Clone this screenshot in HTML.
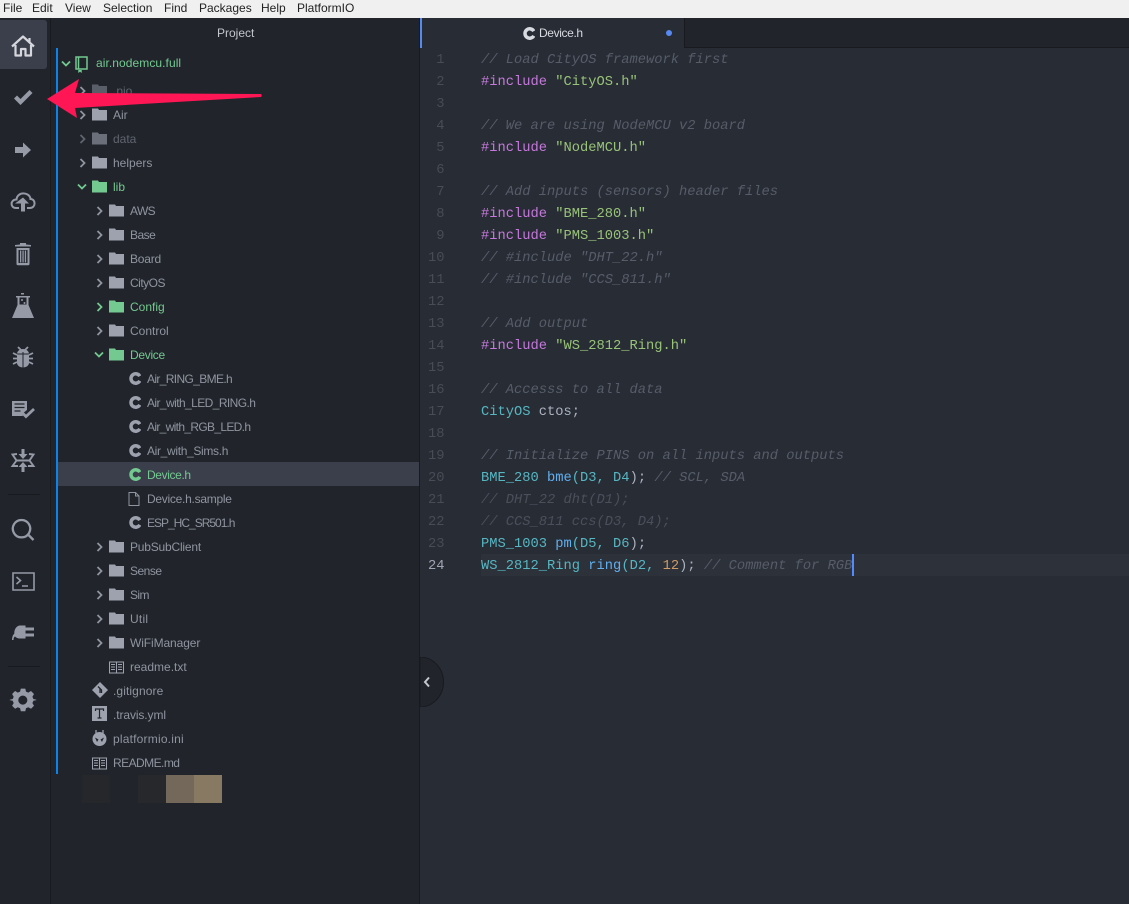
<!DOCTYPE html>
<html><head><meta charset="utf-8"><style>
html,body{margin:0;padding:0;width:1129px;height:904px;overflow:hidden;background:#21252b}
*{box-sizing:border-box}
.a{position:absolute}
#menu{left:0;top:0;width:1129px;height:18px;background:#f0f0f0;font:12px/16px "Liberation Sans",sans-serif;color:#222}
#menu span{position:absolute;top:0}
.r{position:absolute;height:24px;font:12px/24px "Liberation Sans",sans-serif;color:#8f949f;white-space:nowrap}
.g{color:#73c990}.d{color:#5f646e}
svg.i{position:absolute;overflow:visible}
#code{left:481px;top:50px;font:13.75px/22px "Liberation Mono",monospace;color:#abb2bf;white-space:pre;width:640px}
#nums{left:420px;top:50px;width:24.5px;text-align:right;font:13.75px/22px "Liberation Mono",monospace;color:#474c55;white-space:pre}
.c{color:#565c68;font-style:italic}.e{color:#4a4f5a;font-style:italic}.k{color:#c678dd}.s{color:#98c379}.t{color:#56b6c2}.f{color:#61afef}.n{color:#d19a66}
</style></head><body>
<svg width="0" height="0" style="position:absolute"><defs>
<symbol id="fo" viewBox="0 0 15 15"><path fill="currentColor" d="M0 1.500h6l1 1.500h8v10.500H0z"/></symbol>
<symbol id="cv" viewBox="0 0 8 10"><path fill="none" stroke="currentColor" stroke-width="1.800" d="M1.500 1l4 4-4 4"/></symbol>
<symbol id="cd" viewBox="0 0 10 8"><path fill="none" stroke="currentColor" stroke-width="1.800" d="M1 1.500l4 4 4-4"/></symbol>
<symbol id="ci" viewBox="0 0 13 13"><path fill="none" stroke="currentColor" stroke-width="3.500" d="M11.800 4.200A4.700 4.700 0 1 0 11.800 8.800"/></symbol>
<symbol id="bk" viewBox="0 0 15 13"><path fill="none" stroke="currentColor" stroke-width="1" d="M.5 1h14v11H.5zM7.500 1v11M2 3.500h4M2 6h4M2 8.500h4M9 3.500h4M9 6h4M9 8.500h4"/></symbol>
</defs></svg>

<div class="a" id="menu"><span style="left:3px">File</span><span style="left:32px">Edit</span><span style="left:65px">View</span><span style="left:103px">Selection</span><span style="left:164px">Find</span><span style="left:199px">Packages</span><span style="left:261px">Help</span><span style="left:297px">PlatformIO</span></div>

<!-- sidebar -->
<div class="a" style="left:50px;top:18px;width:1px;height:886px;background:#181a1f"></div>
<div class="a" style="left:0;top:20px;width:47px;height:49px;background:#3a3f4b;border-radius:0 3px 3px 0"></div>
<svg class="a" style="left:0;top:0" width="50" height="720" viewBox="0 0 50 720">
<path fill="none" stroke="#d5d7dc" stroke-width="2.200" stroke-linejoin="round" d="M12 46.500L23 36.500l11 10M15.500 45v10.500h5.500v-6.500h4.500v6.500h5.500V45M29.500 42v-4"/>
<g fill="#959aa6" stroke="none">
<path d="M14 98.500l3-3 3.500 3.500 9-9 3 3-12 12z"/>
<path d="M15 147h8v-4.500l8 7.500-8 7.500V153h-8z"/>
<path fill="none" stroke="#959aa6" stroke-width="2" d="M19 208h-3c-6 0-6-8.500.5-8.500C17.500 191 30 192 30.500 199c5.500 0 5.500 9-.5 9h-3"/>
<path d="M23 197.500l6 6h-4v8h-4v-8h-6z"/>
<path d="M15 246.500v-1.500l5-.5v-1.500h6v1.500l5 .5v1.500zM16.500 248h13v16q0 1.200-1.200 1.200h-10.600q-1.200 0-1.200-1.200zM18.500 250v13h9v-13zM20 250.500h1.300v12H20zM22.400 250.500h1.300v12h-1.300zM24.800 250.500h1.300v12h-1.300z" fill-rule="evenodd"/>
<path d="M21 293h3v1.500h-3z"/>
<path fill-rule="evenodd" d="M16 296h14v1.500h-1.500v7.500l5.500 13H12l5.500-13v-7.500H16zM19.500 297.500v7h7v-7z"/>
<circle cx="22" cy="300" r="1"/><circle cx="24.500" cy="303" r="1"/>
<path d="M17 354c0-3 3-5 6-5s6 2 6 5v9c0 2.500-3 4.500-6 4.500s-6-2-6-4.500z"/>
<path fill="none" stroke="#21252b" d="M23 352v16M17 354h12"/>
<path fill="none" stroke="#959aa6" stroke-width="1.800" d="M18 347l3 3M28 347l-3 3M13 353l4 2M33 353l-4 2M13 358.500h4M33 358.500h-4M13 364l4-2M33 364l-4-2"/>
<path d="M12 401h15v9l-5 4 1 2H12z"/>
<path fill="none" stroke="#21252b" stroke-width="1.200" d="M14.500 404h10M14.500 407.500h10M14.500 411h6"/>
<path fill="none" stroke="#959aa6" stroke-width="2.800" d="M22 412.500l4 4 8-7.500"/>
<path d="M21.500 449h3v5h3l-4.500 5-4.500-5h3zM21.500 472h3v-5h3l-4.500-5-4.500 5h3z"/>
<path fill="none" stroke="#959aa6" stroke-width="1.900" d="M17 454l-4.500 .5 4 6-4 5.500h5.500M29 454l4.500 .5-4 6 4 5.500H28M17 460.500h12"/>
<path fill="none" stroke="#959aa6" stroke-width="2.300" d="M21.500 520a8.700 8.700 0 1 0 .01 0zM27.500 534l6 6"/>
<path fill="none" stroke="#959aa6" stroke-width="1.600" d="M13 573h21v17H13zM16.500 577l4 3.500-4 3.500M22 586h6"/>
<path d="M20 625.500h5.500v13H20c-2.500 0-4-1-5-2-1 .5-1.500 1.500-1.500 3.500H12c0-3 1-5.500 2.300-6.300-.3-4.700 2.700-8.200 5.700-8.200zM25.500 627.500h8.500v3h-8.500zM25.500 633.500h8.500v3h-8.500z"/>
<path fill-rule="evenodd" d="M21 689h4.500l.7 3 2.300 1 2.700-1.600 3 3-1.600 2.700 1 2.300 3 .7v.4l-3 .7-1 2.300 1.600 2.700-3 3-2.700-1.600-2.300 1-.7 3H21l-.7-3-2.300-1-2.700 1.600-3-3 1.600-2.700-1-2.300-3-.7v-.4l3-.7 1-2.300-1.600-2.700 3-3 2.700 1.600 2.300-1zM23 696a4.500 4.500 0 1 0 .01 0z" transform="translate(-.2 -.4)"/>
</g>
<rect x="8" y="494" width="32" height="1" fill="#181a1f"/><rect x="8" y="666" width="32" height="1" fill="#181a1f"/>
</svg>

<!-- tree -->
<div class="a" style="left:217px;top:26px;font:12px/15px 'Liberation Sans',sans-serif;color:#c3c6cc">Project</div>
<div class="a" style="left:56px;top:48px;width:2px;height:726px;background:#0a84e8"></div>
<div class="a" style="left:58px;top:462px;width:361px;height:24px;background:#3a3f4b"></div>
<div class="a" style="left:419px;top:18px;width:1px;height:886px;background:#181a1f"></div>

<svg class="i g" style="left:61px;top:60px;color:#73c990" width="10" height="8"><use href="#cd"/></svg>
<svg class="i" style="left:75px;top:56px" width="13" height="16" viewBox="0 0 13 16"><path fill="none" stroke="#73c990" stroke-width="1.500" d="M1 1h11v12H1zM3.500 1v12M4 14v1.500l1-.7 1 .7V14"/></svg>
<div class="r g" style="left:96px;top:51px;letter-spacing:.07px">air.nodemcu.full</div>

<svg class="i" style="left:79px;top:86px;color:#8f949f" width="8" height="10"><use href="#cv"/></svg>
<svg class="i" style="left:92px;top:83px;color:#5a5e68" width="15" height="15"><use href="#fo"/></svg>
<div class="r d" style="left:113px;top:79px">.pio</div>

<svg class="i" style="left:79px;top:110px;color:#8f949f" width="8" height="10"><use href="#cv"/></svg>
<svg class="i" style="left:92px;top:107px;color:#9da2ae" width="15" height="15"><use href="#fo"/></svg>
<div class="r" style="left:113px;top:103px">Air</div>

<svg class="i" style="left:79px;top:134px;color:#5f646e" width="8" height="10"><use href="#cv"/></svg>
<svg class="i" style="left:92px;top:131px;color:#6b6f79" width="15" height="15"><use href="#fo"/></svg>
<div class="r d" style="left:113px;top:127px">data</div>

<svg class="i" style="left:79px;top:158px;color:#8f949f" width="8" height="10"><use href="#cv"/></svg>
<svg class="i" style="left:92px;top:155px;color:#9da2ae" width="15" height="15"><use href="#fo"/></svg>
<div class="r" style="left:113px;top:151px">helpers</div>

<svg class="i" style="left:77px;top:183px;color:#73c990" width="10" height="8"><use href="#cd"/></svg>
<svg class="i" style="left:92px;top:179px;color:#73c990" width="15" height="15"><use href="#fo"/></svg>
<div class="r g" style="left:113px;top:175px">lib</div>

<svg class="i" style="left:96px;top:206px;color:#8f949f" width="8" height="10"><use href="#cv"/></svg>
<svg class="i" style="left:109px;top:203px;color:#9da2ae" width="15" height="15"><use href="#fo"/></svg>
<div class="r" style="left:130px;top:199px;letter-spacing:-.6px">AWS</div>

<svg class="i" style="left:96px;top:230px;color:#8f949f" width="8" height="10"><use href="#cv"/></svg>
<svg class="i" style="left:109px;top:227px;color:#9da2ae" width="15" height="15"><use href="#fo"/></svg>
<div class="r" style="left:130px;top:223px;letter-spacing:-.5px">Base</div>

<svg class="i" style="left:96px;top:254px;color:#8f949f" width="8" height="10"><use href="#cv"/></svg>
<svg class="i" style="left:109px;top:251px;color:#9da2ae" width="15" height="15"><use href="#fo"/></svg>
<div class="r" style="left:130px;top:247px;letter-spacing:-.2px">Board</div>

<svg class="i" style="left:96px;top:278px;color:#8f949f" width="8" height="10"><use href="#cv"/></svg>
<svg class="i" style="left:109px;top:275px;color:#9da2ae" width="15" height="15"><use href="#fo"/></svg>
<div class="r" style="left:130px;top:271px;letter-spacing:-.5px">CityOS</div>

<svg class="i" style="left:96px;top:302px;color:#73c990" width="8" height="10"><use href="#cv"/></svg>
<svg class="i" style="left:109px;top:299px;color:#73c990" width="15" height="15"><use href="#fo"/></svg>
<div class="r g" style="left:130px;top:295px">Config</div>

<svg class="i" style="left:96px;top:326px;color:#8f949f" width="8" height="10"><use href="#cv"/></svg>
<svg class="i" style="left:109px;top:323px;color:#9da2ae" width="15" height="15"><use href="#fo"/></svg>
<div class="r" style="left:130px;top:319px">Control</div>

<svg class="i" style="left:94px;top:351px;color:#73c990" width="10" height="8"><use href="#cd"/></svg>
<svg class="i" style="left:109px;top:347px;color:#73c990" width="15" height="15"><use href="#fo"/></svg>
<div class="r g" style="left:130px;top:343px;letter-spacing:-.3px">Device</div>

<svg class="i" style="left:128px;top:372px;color:#9da2ae" width="13" height="13"><use href="#ci"/></svg>
<div class="r" style="left:147px;top:367px;letter-spacing:-.64px">Air_RING_BME.h</div>
<svg class="i" style="left:128px;top:396px;color:#9da2ae" width="13" height="13"><use href="#ci"/></svg>
<div class="r" style="left:147px;top:391px;letter-spacing:-.58px">Air_with_LED_RING.h</div>
<svg class="i" style="left:128px;top:420px;color:#9da2ae" width="13" height="13"><use href="#ci"/></svg>
<div class="r" style="left:147px;top:415px;letter-spacing:-.67px">Air_with_RGB_LED.h</div>
<svg class="i" style="left:128px;top:444px;color:#9da2ae" width="13" height="13"><use href="#ci"/></svg>
<div class="r" style="left:147px;top:439px;letter-spacing:-.33px">Air_with_Sims.h</div>
<svg class="i" style="left:128px;top:468px;color:#73c990" width="13" height="13"><use href="#ci"/></svg>
<div class="r g" style="left:147px;top:463px;letter-spacing:-.37px">Device.h</div>
<svg class="i" style="left:128px;top:492px" width="12" height="14" viewBox="0 0 12 14"><path fill="none" stroke="#8f949f" d="M1 .5h6.500l3.500 3.500v9.500H1zM7.500 .5v3.500H11"/></svg>
<div class="r" style="left:147px;top:487px;letter-spacing:-.27px">Device.h.sample</div>
<svg class="i" style="left:128px;top:516px;color:#9da2ae" width="13" height="13"><use href="#ci"/></svg>
<div class="r" style="left:147px;top:511px;letter-spacing:-1px">ESP_HC_SR501.h</div>

<svg class="i" style="left:96px;top:542px;color:#8f949f" width="8" height="10"><use href="#cv"/></svg>
<svg class="i" style="left:109px;top:539px;color:#9da2ae" width="15" height="15"><use href="#fo"/></svg>
<div class="r" style="left:130px;top:535px;letter-spacing:-.2px">PubSubClient</div>
<svg class="i" style="left:96px;top:566px;color:#8f949f" width="8" height="10"><use href="#cv"/></svg>
<svg class="i" style="left:109px;top:563px;color:#9da2ae" width="15" height="15"><use href="#fo"/></svg>
<div class="r" style="left:130px;top:559px;letter-spacing:-.5px">Sense</div>
<svg class="i" style="left:96px;top:590px;color:#8f949f" width="8" height="10"><use href="#cv"/></svg>
<svg class="i" style="left:109px;top:587px;color:#9da2ae" width="15" height="15"><use href="#fo"/></svg>
<div class="r" style="left:130px;top:583px;letter-spacing:-.6px">Sim</div>
<svg class="i" style="left:96px;top:614px;color:#8f949f" width="8" height="10"><use href="#cv"/></svg>
<svg class="i" style="left:109px;top:611px;color:#9da2ae" width="15" height="15"><use href="#fo"/></svg>
<div class="r" style="left:130px;top:607px;letter-spacing:.25px">Util</div>
<svg class="i" style="left:96px;top:638px;color:#8f949f" width="8" height="10"><use href="#cv"/></svg>
<svg class="i" style="left:109px;top:635px;color:#9da2ae" width="15" height="15"><use href="#fo"/></svg>
<div class="r" style="left:130px;top:631px;letter-spacing:-.1px">WiFiManager</div>
<svg class="i" style="left:109px;top:661px;color:#9da2ae" width="15" height="13"><use href="#bk"/></svg>
<div class="r" style="left:130px;top:655px">readme.txt</div>

<svg class="i" style="left:92px;top:682px" width="16" height="16" viewBox="0 0 16 16"><path fill="#9da2ae" d="M8 0l8 8-8 8-8-8z"/><path fill="none" stroke="#21252b" stroke-width="1.300" d="M6 4.500l3.500 3.500v3M8 6.500L8 11"/></svg>
<div class="r" style="left:113px;top:679px;letter-spacing:.1px">.gitignore</div>
<svg class="i" style="left:92px;top:706px" width="15" height="15" viewBox="0 0 15 15"><path fill="#9da2ae" d="M0 0h15v15H0z"/><path fill="none" stroke="#21252b" stroke-width="1.200" d="M3.500 5V3h8v2M7.500 3v9M5.500 12h4"/></svg>
<div class="r" style="left:113px;top:703px;letter-spacing:-.1px">.travis.yml</div>
<svg class="i" style="left:92px;top:730px" width="15" height="16" viewBox="0 0 15 16"><circle cx="7.500" cy="9" r="7" fill="#9da2ae"/><path d="M3 7.500l3.500 2-1.500 2.500zM12 7.500l-3.500 2 1.500 2.500z" fill="#21252b"/><path stroke="#9da2ae" stroke-width="1.300" d="M4 0v3M11 0v3"/></svg>
<div class="r" style="left:113px;top:727px;letter-spacing:.2px">platformio.ini</div>
<svg class="i" style="left:92px;top:757px;color:#9da2ae" width="15" height="13"><use href="#bk"/></svg>
<div class="r" style="left:113px;top:751px;letter-spacing:-.55px">README.md</div>

<div class="a" style="left:82px;top:775px;width:28px;height:28px;background:#25272a"></div>
<div class="a" style="left:138px;top:775px;width:28px;height:28px;background:#26282b"></div>
<div class="a" style="left:166px;top:775px;width:28px;height:28px;background:#736859"></div>
<div class="a" style="left:194px;top:775px;width:28px;height:28px;background:#887a62"></div>

<!-- editor -->
<div class="a" style="left:420px;top:18px;width:709px;height:886px;background:#282c34"></div>
<div class="a" style="left:684px;top:18px;width:445px;height:30px;background:#21252b;border-left:1px solid #181a1f;border-bottom:1px solid #181a1f"></div>
<div class="a" style="left:420px;top:18px;width:2px;height:30px;background:#568af2"></div>
<svg class="i" style="left:522px;top:27px;color:#d7dae0" width="13" height="13"><use href="#ci"/></svg>
<div class="a" style="left:539px;top:26px;font:12px/15px 'Liberation Sans',sans-serif;color:#d7dae0;letter-spacing:-.37px">Device.h</div>
<div class="a" style="left:666px;top:30px;width:6px;height:6px;border-radius:50%;background:#568af2"></div>
<div class="a" style="left:481px;top:554px;width:648px;height:22px;background:#2c313a"></div>
<div class="a" id="nums">1
2
3
4
5
6
7
8
9
10
11
12
13
14
15
16
17
18
19
20
21
22
23
<span style="color:#9da5b4">24</span></div>
<div class="a" id="code"><span class="c">// Load CityOS framework first</span>
<span class="k">#include</span> <span class="s">"CityOS.h"</span>

<span class="c">// We are using NodeMCU v2 board</span>
<span class="k">#include</span> <span class="s">"NodeMCU.h"</span>

<span class="c">// Add inputs (sensors) header files</span>
<span class="k">#include</span> <span class="s">"BME_280.h"</span>
<span class="k">#include</span> <span class="s">"PMS_1003.h"</span>
<span class="c">// #include "DHT_22.h"</span>
<span class="c">// #include "CCS_811.h"</span>

<span class="c">// Add output</span>
<span class="k">#include</span> <span class="s">"WS_2812_Ring.h"</span>

<span class="c">// Accesss to all data</span>
<span class="t">CityOS</span> ctos;

<span class="c">// Initialize PINS on all inputs and outputs</span>
<span class="t">BME_280</span> <span class="f">bme</span><span class="t">(D3, D4</span>); <span class="c">// SCL, SDA</span>
<span class="e">// DHT_22 dht(D1);</span>
<span class="e">// CCS_811 ccs(D3, D4);</span>
<span class="t">PMS_1003</span> <span class="f">pm</span><span class="t">(D5, D6</span>);
<span class="t">WS_2812_Ring</span> <span class="f">ring</span><span class="t">(D2,</span> <span class="n">12</span>); <span class="c">// Comment for RGB</span></div>
<div class="a" style="left:852px;top:554px;width:2px;height:22px;background:#528bff"></div>

<svg class="a" style="left:420px;top:657px" width="24" height="50" viewBox="0 0 24 50"><path d="M0 0a23.500 25 0 0 1 0 50z" fill="#21252b" stroke="#181a1f"/><path d="M9 20.500l-4 4.500 4 4.500" fill="none" stroke="#c5c8ce" stroke-width="2"/></svg>

<!-- arrow -->
<svg class="a" style="left:0;top:0" width="300" height="140"><path fill="#ff1654" d="M47 99L79 79 75 93 261 94q1.500 1.500 0 3L75 108 77 118z"/></svg>
</body></html>
